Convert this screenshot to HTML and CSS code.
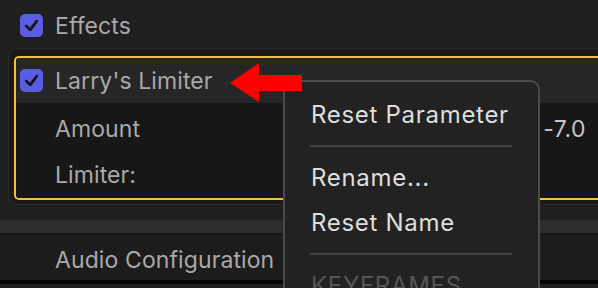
FILE: index.html
```html
<!DOCTYPE html>
<html lang="en">
<head>
    <meta charset="UTF-8">
    <title>Inspector</title>
    <link rel="stylesheet" href="styles.css">
</head>
<body>
    <div class="inspector">
        <div class="group-row">
            <span class="check"><svg viewBox="0 0 24 24"><path d="M6 12.5 L10.5 17 L18 7"/></svg></span>
            <span class="label">Effects</span>
        </div>

        <div class="panel">
            <div class="effect selected">
                <div class="effect-head">
                    <span class="check"><svg viewBox="0 0 24 24"><path d="M6 12.5 L10.5 17 L18 7"/></svg></span>
                    <span class="label">Larry's Limiter</span>
                </div>
                <div class="effect-body">
                    <div class="param">
                        <span class="label">Amount</span>
                        <span class="value">-7.0</span>
                    </div>
                    <div class="param">
                        <span class="label">Limiter:</span>
                    </div>
                </div>
            </div>
        </div>

        <div class="divider"></div>

        <div class="section-row">
            <span class="label">Audio Configuration</span>
        </div>
    </div>

    <!-- context menu over the inspector -->
    <div class="menu">
        <div class="menu-item">Reset Parameter</div>
        <div class="menu-sep"></div>
        <div class="menu-item">Rename...</div>
        <div class="menu-item">Reset Name</div>
        <div class="menu-sep"></div>
        <div class="menu-item disabled">KEYFRAMES</div>
    </div>

    <svg class="arrow" viewBox="0 0 72 40" width="72" height="40">
        <polygon points="0,21 29,1 29,13 72,13 72,29 29,29 29,40"/>
    </svg>
</body>
</html>
```

FILE: styles.css
```css
body {
    margin: 0;
    width: 598px;
    height: 288px;
    overflow: hidden;
    background: #1f1f1f;
    font-family: Inter, "Noto Sans", sans-serif;
    position: relative;
}
.inspector {
    display: flex;
    flex-direction: column;
}
.label {
    color: #a9a9a9;
    font-size: 23px;
    letter-spacing: 0.1px;
}
.check {
    width: 23px;
    height: 23px;
    border-radius: 5px;
    background: #5a5de3;
    display: flex;
    align-items: center;
    justify-content: center;
    margin-right: 12px;
}
.check svg {
    width: 21px;
    height: 21px;
    fill: none;
    stroke: #141414;
    stroke-width: 3.2;
    stroke-linecap: round;
    stroke-linejoin: round;
}
.group-row {
    height: 48px;
    display: flex;
    align-items: center;
    padding-left: 20px;
    padding-top: 3px;
    box-sizing: border-box;
}
.panel {
    margin-left: 8px;
    height: 157px;
    box-sizing: border-box;
    background: #1a1a1a;
    border: 1px solid #2a2a2a;
    border-right: none;
    border-radius: 9px 0 0 9px;
    padding: 7px 0 0 5px;
}
.effect {
    border: 2px solid #f3c232;
    border-right: none;
    border-radius: 5px 0 0 5px;
    overflow: hidden;
}
.effect-head {
    height: 45px;
    background: #262626;
    display: flex;
    align-items: center;
    padding-left: 4px;
}
.effect-body {
    background: #171717;
    padding-top: 3px;
}
.param {
    height: 46px;
    display: flex;
    align-items: center;
    padding-left: 39px;
}
.param .value {
    margin-left: auto;
    margin-right: 12px;
    color: #c6c6c6;
    font-size: 23px;
    letter-spacing: 0.5px;
}
.divider {
    margin-top: 15px;
    height: 13px;
    background: #2c2c2c;
    border-bottom: 2px solid #181818;
}
.section-row {
    height: 49px;
    background: #1c1c1c;
    display: flex;
    align-items: center;
    padding-left: 55px;
    padding-top: 4px;
    box-sizing: border-box;
    border-bottom: 4px solid #050505;
}
.menu {
    position: absolute;
    left: 283px;
    top: 80px;
    width: 253px;
    height: 240px;
    background: #222222;
    border: 2px solid #4a4a4a;
    border-radius: 10px;
    padding: 10px 0 0;
}
.menu-item {
    height: 45px;
    display: flex;
    align-items: center;
    padding-left: 26px;
    color: #dedede;
    font-size: 24px;
    letter-spacing: 0.7px;
}
.menu-item.disabled {
    color: #555555;
}
.menu-sep {
    height: 2px;
    background: #444444;
    margin: 8px 26px 8px 25px;
}
.arrow {
    position: absolute;
    left: 230px;
    top: 62px;
}
.arrow polygon {
    fill: #fe0000;
}
```
